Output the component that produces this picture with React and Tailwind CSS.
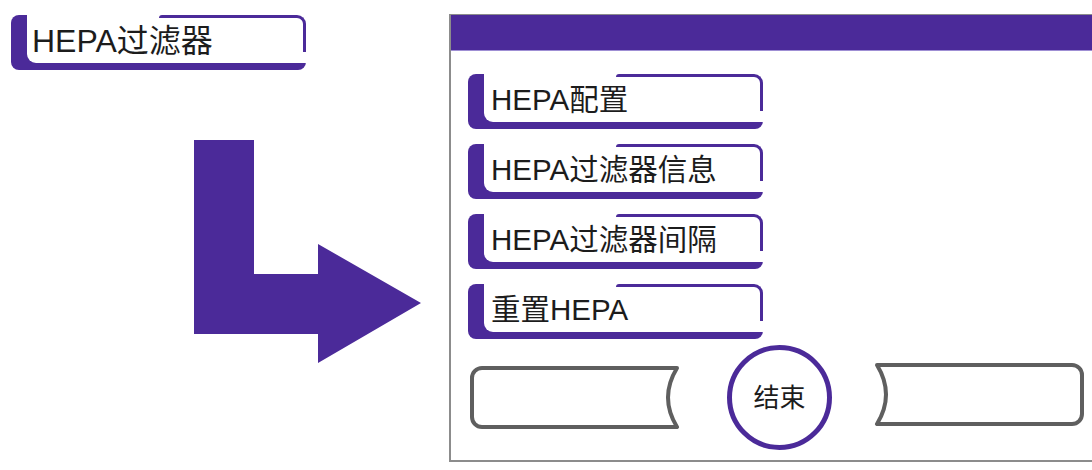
import React from "react";

const FONT = { fontFamily: '"Liberation Sans", "Noto Sans CJK SC", sans-serif' };

function FrameButton({ label, textClass = "text-[29.5px]", width = "w-[295px]", pad = "pl-[7px]" }) {
  return (
    <div className={`relative ${width} h-[55px] bg-[#4b2a99] rounded-[8px] shrink-0`}>
      <div className={`ml-[16px] h-[48px] bg-white rounded-bl-[9px] flex items-center ${pad}`}>
        <span className={`${textClass} leading-none text-[#1c1c1c] pt-[3px]`} style={FONT}>
          {label}
        </span>
      </div>
      <div className="absolute right-0 top-0 w-[147px] h-[37px] border-t-[3px] border-r-[3px] border-[#4b2a99] rounded-tr-[9px] rounded-tl-[3px]" />
    </div>
  );
}

function GrayButton({ flip = false }) {
  const d = "M 12 2 H 207 Q 189 31.5 207 61 H 12 A 10 10 0 0 1 2 51 V 12 A 10 10 0 0 1 12 2 Z";
  return (
    <button className="w-[211px] h-[63px] shrink-0">
      <svg width="211" height="63" viewBox="0 0 211 63" className={flip ? "-scale-x-100" : ""}>
        <path d={d} fill="white" stroke="#5f5f5f" strokeWidth="4" strokeLinejoin="round" />
      </svg>
    </button>
  );
}

export default function App() {
  return (
    <div className="w-[1092px] h-[470px] bg-white flex overflow-hidden" style={FONT}>
      <div className="w-[449px] shrink-0 pt-[15px] pl-[11px] flex flex-col">
        <FrameButton label="HEPA过滤器" textClass="text-[32px]" pad="pl-[5px]" />
        <svg width="227" height="223" viewBox="0 0 227 223" className="mt-[70px] ml-[183px]">
          <polygon
            points="0,0 60,0 60,134 124,134 124,104 227,163 124,223 124,194 0,194"
            fill="#4b2a99"
          />
        </svg>
      </div>
      <div className="flex-1 mt-[14px] h-[448px] border-t-[1px] border-l-[2px] border-b-[2px] border-[#8c8c8c] flex flex-col">
        <div className="h-[36px] bg-[#4b2a99] border-b border-[#9f8fd4] shrink-0" />
        <div className="pl-[17px] pt-[23px] flex flex-col gap-[15px]">
          <FrameButton label="HEPA配置" />
          <FrameButton label="HEPA过滤器信息" />
          <FrameButton label="HEPA过滤器间隔" />
          <FrameButton label="重置HEPA" />
        </div>
        <div className="pl-[19px] mt-[6px] flex items-center">
          <GrayButton />
          <button className="ml-[46px] w-[105px] h-[105px] rounded-full border-[5px] border-[#4b2a99] bg-white flex items-center justify-center shrink-0">
            <span className="text-[26px] leading-none text-[#1c1c1c]" style={FONT}>结束</span>
          </button>
          <div className="ml-[41px]">
            <GrayButton flip />
          </div>
        </div>
      </div>
    </div>
  );
}
